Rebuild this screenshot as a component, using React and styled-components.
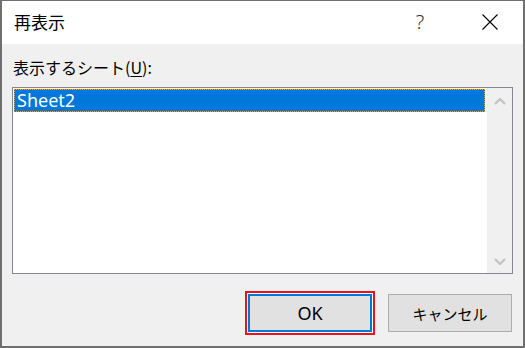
import React from "react";
import styled, { createGlobalStyle } from "styled-components";

const Global = createGlobalStyle`
  html, body { margin: 0; padding: 0; background: #f0f0f0; }
  body { font-family: "Segoe UI", "Noto Sans", "Noto Sans CJK JP", sans-serif; }
  * { box-sizing: border-box; }
`;

const Window = styled.div`
  width: 525px;
  height: 348px;
  border: 2px solid #6f6f6f;
  border-top-width: 1px;
  background: #f0f0f0;
  display: flex;
  flex-direction: column;
`;

const TitleBar = styled.div`
  height: 43px;
  background: #ffffff;
  display: flex;
  align-items: center;
  padding-left: 12px;
  flex-shrink: 0;
`;

const Title = styled.div`
  font-family: "Noto Sans CJK JP", sans-serif;
  font-size: 17px;
  color: #000;
  flex: 1;
  margin-top: -2px;
`;

const Help = styled.div`
  width: 20px;
  font-family: "Noto Sans", sans-serif;
  font-size: 20px;
  font-weight: 300;
  color: #333;
  text-align: center;
  margin-right: 52px;
  margin-top: -2px;
`;

const Close = styled.div`
  width: 16px;
  height: 16px;
  margin-right: 25px;
  margin-top: -1px;
  display: flex;
`;

const Body = styled.div`
  flex: 1;
  display: flex;
  flex-direction: column;
  padding: 12px 10px 14px 10px;
`;

const Label = styled.div`
  font-family: "Noto Sans CJK JP", sans-serif;
  font-size: 16px;
  line-height: 22px;
  color: #000;
  padding-left: 1px;
  margin-bottom: 9px;
  u { text-underline-offset: 2px; }
`;

const ListBox = styled.div`
  height: 187px;
  border: 1px solid #828790;
  background: #ffffff;
  display: flex;
`;

const Items = styled.div`
  flex: 1;
  padding: 1px 2px 1px 1px;
`;

const Item = styled.div`
  height: 23px;
  background: ${(p) => (p.$selected ? "#0078d7" : "transparent")};
  color: ${(p) => (p.$selected ? "#ffffff" : "#000")};
  border: 1px dotted ${(p) => (p.$selected ? "#f0a030" : "transparent")};
  font-family: "Segoe UI", "Noto Sans", sans-serif;
  font-size: 18px;
  line-height: 20px;
  padding-left: 2px;
`;

const ScrollBar = styled.div`
  width: 25px;
  background: #f0f0f0;
  display: flex;
  flex-direction: column;
  justify-content: space-between;
  align-items: center;
  padding: 10px 0 8px;
`;

const Buttons = styled.div`
  margin-top: auto;
  display: flex;
  justify-content: flex-end;
  gap: 16px;
`;

const Button = styled.button`
  width: 124px;
  height: 38px;
  background: #e1e1e1;
  border: ${(p) => (p.$default ? "2px solid #0078d7" : "1px solid #adadad")};
  font-family: "Segoe UI", "Noto Sans", "Noto Sans CJK JP", sans-serif;
  font-size: ${(p) => p.$size || 18}px;
  color: #000;
  padding: 0;
  box-shadow: ${(p) =>
    p.$highlight ? "0 0 0 1px #ffffff, 0 0 0 3px #e8141c" : "none"};
  margin-right: ${(p) => (p.$last ? "1px" : "0")};
`;

const Chevron = ({ down }) => (
  <svg width="12" height="7" viewBox="0 0 12 7">
    <path
      d={down ? "M1 1 L6 6 L11 1" : "M1 6 L6 1 L11 6"}
      fill="none"
      stroke="#c2c2c2"
      strokeWidth="2.2"
    />
  </svg>
);

export default function App() {
  return (
    <>
      <Global />
      <Window>
        <TitleBar>
          <Title>再表示</Title>
          <Help>?</Help>
          <Close>
            <svg width="16" height="16" viewBox="0 0 16 16">
              <path d="M0.5 0.5 L15.5 15.5 M15.5 0.5 L0.5 15.5" stroke="#000" strokeWidth="1.1" />
            </svg>
          </Close>
        </TitleBar>
        <Body>
          <Label>
            表示するシート(<u>U</u>):
          </Label>
          <ListBox>
            <Items>
              <Item $selected>Sheet2</Item>
            </Items>
            <ScrollBar>
              <Chevron />
              <Chevron down />
            </ScrollBar>
          </ListBox>
          <Buttons>
            <Button $default $highlight>OK</Button>
            <Button $last $size={15}>キャンセル</Button>
          </Buttons>
        </Body>
      </Window>
    </>
  );
}
